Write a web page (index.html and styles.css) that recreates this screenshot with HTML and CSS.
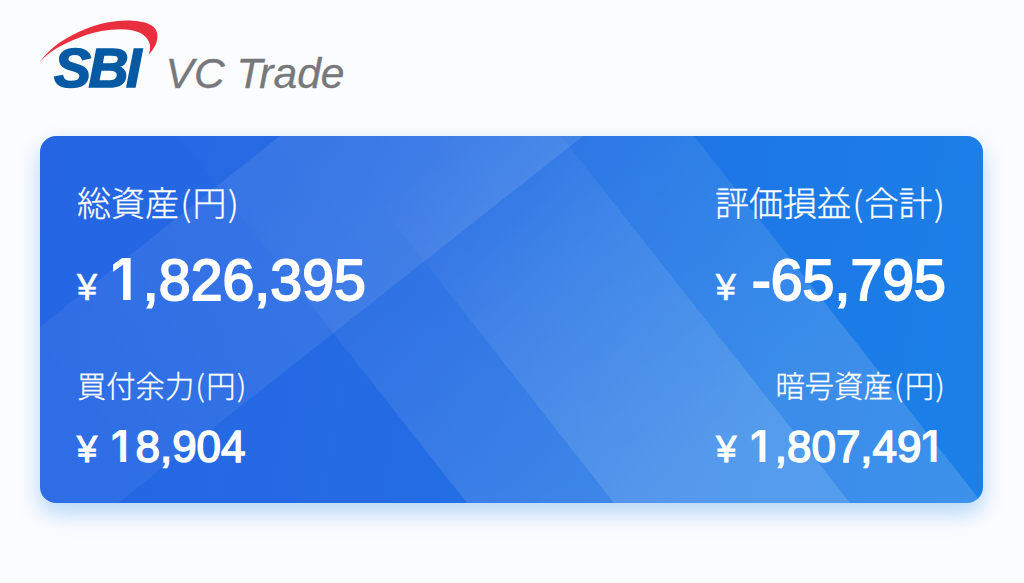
FILE: index.html
```html
<!DOCTYPE html>
<html lang="ja">
<head>
    <meta charset="UTF-8">
    <meta name="viewport" content="width=device-width, initial-scale=1.0">
    <title>SBI VC Trade</title>
    <link rel="stylesheet" href="styles.css">
</head>
<body>

    <header class="header">
        <svg class="logo" width="310" height="80" viewBox="0 0 310 80" role="img" aria-label="SBI VC Trade">
            <path class="logo-arc" d="M-0.500 41.500 C6 32 16 23 27 17 C44 7.500 64 -0.300 86 -0.500 C106 -0.500 117.500 4 117.500 15 C117.500 22 114 28 108.700 33.700 C110.500 28 110.500 24 109 21 C105 12 95 8.300 80.700 8.300 C56 8.300 36 17 17 27 C10 31 4 36 -0.500 41.500 Z"/>
            <text class="logo-sbi" x="14" y="66">SBI</text>
            <text class="logo-name" x="125.500" y="66.500" textLength="179" lengthAdjust="spacingAndGlyphs">VC Trade</text>
        </svg>
    </header>

    <main class="card">
        <svg class="card-bg" viewBox="0 0 943 367" preserveAspectRatio="none" aria-hidden="true">
            <defs>
                <linearGradient id="rise" gradientUnits="userSpaceOnUse" x1="30" y1="300" x2="410" y2="0">
                    <stop offset="0" stop-color="#fff" stop-opacity=".045"/>
                    <stop offset="1" stop-color="#fff" stop-opacity=".1"/>
                </linearGradient>
                <linearGradient id="wide" gradientUnits="userSpaceOnUse" x1="300" y1="0" x2="587" y2="367">
                    <stop offset="0" stop-color="#fff" stop-opacity=".01"/>
                    <stop offset="1" stop-color="#fff" stop-opacity=".14"/>
                </linearGradient>
                <linearGradient id="inner" gradientUnits="userSpaceOnUse" x1="340" y1="60" x2="640" y2="367">
                    <stop offset="0" stop-color="#fff" stop-opacity="0"/>
                    <stop offset=".4" stop-color="#fff" stop-opacity=".07"/>
                    <stop offset="1" stop-color="#fff" stop-opacity=".13"/>
                </linearGradient>
            </defs>
            <polygon fill="url(#rise)" points="0,191 240,0 543,0 78,367 0,367"/>
            <polygon fill="url(#wide)" points="138,0 654,0 942,367 427,367"/>
            <polygon fill="url(#inner)" points="286,0 521,0 810,367 574,367"/>
        </svg>

        <div class="row row-large">
            <div class="item">
                <div class="label">総資産<span class="paren">(</span>円<span class="paren">)</span></div>
                <div class="value"><span class="yen">¥</span><span class="amount"><span class="one">1</span>,826,395</span></div>
            </div>
            <div class="item item-right">
                <div class="label">評価損益<span class="paren">(</span>合計<span class="paren">)</span></div>
                <div class="value"><span class="yen">¥</span><span class="amount">-65,795</span></div>
            </div>
        </div>

        <div class="row row-small">
            <div class="item">
                <div class="label">買付余力<span class="paren">(</span>円<span class="paren">)</span></div>
                <div class="value"><span class="yen">¥</span><span class="amount"><span class="one">1</span>8,904</span></div>
            </div>
            <div class="item item-right">
                <div class="label">暗号資産<span class="paren">(</span>円<span class="paren">)</span></div>
                <div class="value"><span class="yen">¥</span><span class="amount"><span class="one">1</span>,807,49<span class="one">1</span></span></div>
            </div>
        </div>
    </main>

</body>
</html>
```
FILE: styles.css
```css
* {
    box-sizing: border-box;
}
body {
    margin: 0;
    padding: 21px 40px 0;
    height: 583px;
    background-color: #fbfcfe;
    font-family: "Noto Sans CJK JP", sans-serif;
    overflow: hidden;
}
.header {
    height: 115px;
}
.logo {
    display: block;
    overflow: visible;
}
.logo-arc {
    fill: #e92f3d;
}
.logo-sbi {
    font: italic bold 55.5px "Liberation Sans", sans-serif;
    letter-spacing: -2.5px;
    fill: #065aa3;
    stroke: #065aa3;
    stroke-width: 1.6px;
}
.logo-name {
    font: italic 43px "Liberation Sans", sans-serif;
    fill: #77787b;
    stroke: #77787b;
    stroke-width: 0.3px;
}

.card {
    position: relative;
    width: 943px;
    height: 367px;
    padding: 43px 37px 0;
    border-radius: 16px;
    overflow: hidden;
    color: #fff;
    background: linear-gradient(100deg, #2565e3 0%, #246be3 40%, #1c79e6 75%, #1c80e8 100%);
    box-shadow: 0 10px 22px rgba(80, 160, 240, 0.42);
}
.card-bg {
    position: absolute;
    top: 0;
    left: 0;
    width: 100%;
    height: 100%;
}

.row {
    position: relative;
    display: flex;
    justify-content: space-between;
}
.row-large {
    height: 184px;
}
.item-right {
    display: flex;
    flex-direction: column;
    align-items: flex-end;
}
.label {
    font-weight: 300;
    white-space: nowrap;
    -webkit-text-stroke: 0.3px #fff;
}
.paren {
    padding: 0 1.4px;
}
.value {
    display: flex;
    align-items: baseline;
    font-family: "Liberation Sans", sans-serif;
    white-space: nowrap;
}
.yen {
    width: 34px;
    font-size: 36px;
    -webkit-text-stroke: 0.6px #fff;
}
.amount {
    -webkit-text-stroke: 1.9px #fff;
}
/* footless 1, kept at the width of the other digits */
.one {
    display: inline-block;
    width: 0.556em;
    font-family: Inter, sans-serif;
    font-weight: 600;
    line-height: 1;
    text-indent: -0.01em;
    -webkit-text-stroke: 0;
}

.row-large .label {
    font-size: 34px;
    line-height: 46px;
}
.row-large .value {
    margin-top: 20px;
    line-height: 70px;
}
.row-large .amount {
    font-size: 57.3px;
}
.row-large .item-right .yen {
    width: 36px;
}
.row-small .label {
    font-size: 29.3px;
    line-height: 42px;
}
.row-small .value {
    margin-top: 15px;
    line-height: 54px;
}
.row-small .yen {
    -webkit-text-stroke-width: 1.1px;
}
.row-small .amount {
    font-size: 44px;
    -webkit-text-stroke-width: 1.5px;
}
```
